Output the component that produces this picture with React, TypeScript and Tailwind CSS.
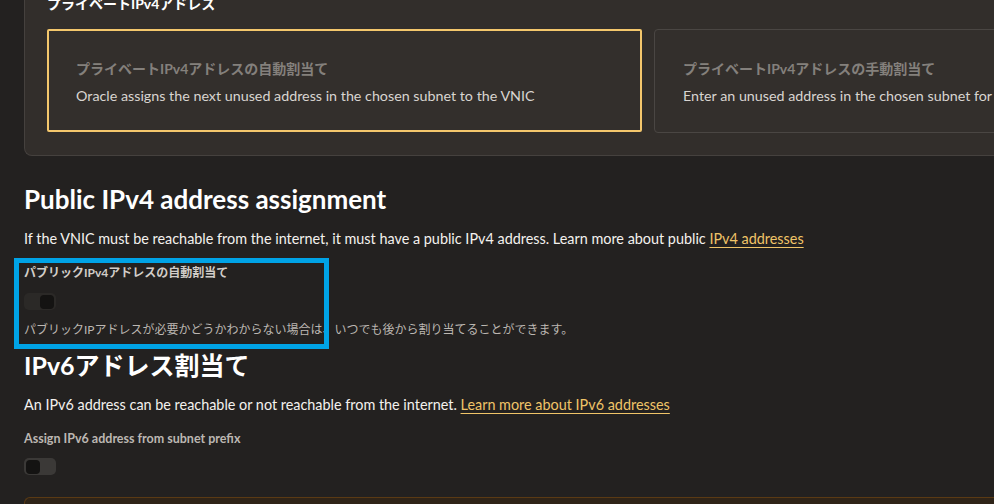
import React from "react";

const font = {
  fontFamily: 'Lato, "Noto Sans CJK JP", sans-serif',
};

interface ToggleProps {
  on: boolean;
}

const Toggle: React.FC<ToggleProps> = ({ on }) => {
  return (
    <div
      className={`flex h-[17px] w-[32px] items-center rounded-[5px] px-[2px] ${
        on ? "justify-end bg-[#2b2927]" : "justify-start bg-[#3b3937]"
      }`}
    >
      <div className="h-[14px] w-[14px] rounded-[4px] bg-[#141312]" />
    </div>
  );
};

const App: React.FC = () => {
  return (
    <div
      className="relative h-[504px] w-[994px] overflow-hidden bg-[#232120] text-white"
      style={font}
    >
      {/* private IPv4 panel, top is cut off */}
      <div className="ml-[24px] mt-[-14px] w-[1000px] rounded-bl-lg border-b border-l border-[#45413e] bg-[#322e2b] pb-[22px] pl-[22px] pt-[6px]">
        <h3 className="text-[14px] font-bold leading-[24px]">
          プライベートIPv4アドレス
        </h3>
        <div className="mt-[13px] flex gap-[12px]">
          <div className="h-[103px] w-[595px] shrink-0 rounded-[2px] border-2 border-[#f4c76c] bg-[#332f2c] pl-[27px] pt-[26px]">
            <p className="text-[14px] font-bold leading-[24px] text-[#84807c]">
              プライベートIPv4アドレスの自動割当て
            </p>
            <p className="mt-[3px] text-[14.3px] leading-[24px] text-[#d9d5d1]">
              Oracle assigns the next unused address in the chosen subnet to the VNIC
            </p>
          </div>
          <div className="h-[104px] w-[595px] shrink-0 rounded-[4px] border border-[#4a4643] bg-[#332f2c] pl-[28px] pt-[27px]">
            <p className="text-[14px] font-bold leading-[24px] text-[#84807c]">
              プライベートIPv4アドレスの手動割当て
            </p>
            <p className="mt-[3px] text-[14.3px] leading-[24px] text-[#d9d5d1]">
              Enter an unused address in the chosen subnet for the VNIC
            </p>
          </div>
        </div>
      </div>

      <div className="px-[24px]">
        {/* public IPv4 */}
        <h2 className="mt-[26px] text-[26px] font-bold leading-[34px]">
          Public IPv4 address assignment
        </h2>
        <p className="mt-[13px] text-[14.4px] leading-[20px] text-[#f4f1ee]">
          If the VNIC must be reachable from the internet, it must have a public
          IPv4 address. Learn more about public{" "}
          <a className="text-[#f0c468] underline underline-offset-[3px]">
            IPv4 addresses
          </a>
        </p>
        <p className="mt-[16px] text-[12px] font-bold leading-[16px] text-[#d2cdc8]">
          パブリックIPv4アドレスの自動割当て
        </p>
        <div className="mt-[12px]">
          <Toggle on={true} />
        </div>
        <p className="mt-[11px] text-[12px] leading-[18px] text-[#bcb7b2]">
          パブリックIPアドレスが必要かどうかわからない場合は、いつでも後から割り当てることができます。
        </p>

        {/* IPv6 */}
        <h2 className="mt-[10px] text-[25px] font-bold leading-[32px]">
          IPv6アドレス割当て
        </h2>
        <p className="mt-[14px] text-[14.4px] leading-[20px] text-[#f4f1ee]">
          An IPv6 address can be reachable or not reachable from the internet.{" "}
          <a className="text-[#f0c468] underline underline-offset-[3px]">
            Learn more about IPv6 addresses
          </a>
        </p>
        <p className="mt-[16px] text-[12.5px] font-bold leading-[16px] text-[#bcb7b2]">
          Assign IPv6 address from subnet prefix
        </p>
        <div className="mt-[11px]">
          <Toggle on={false} />
        </div>
        <div className="mt-[22px] h-[20px] w-[1000px] rounded-tl-md border-l border-t border-[#5a3a14] bg-[#2f2418]" />
      </div>

      {/* annotation outline */}
      <div className="absolute left-[14px] top-[258px] h-[91px] w-[315px] border-[5px] border-[#00a3e6]" />
    </div>
  );
};

export default App;
